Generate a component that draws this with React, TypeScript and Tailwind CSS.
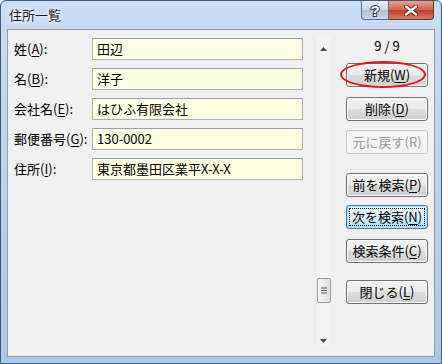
import React from "react";

const font = { fontFamily: '"Noto Sans CJK JP", "Noto Sans", sans-serif' };

function Ul({ text, k, suffix = ":" }: { text: string; k: string; suffix?: string }) {
  return (
    <span>
      {text}(<span className="underline underline-offset-2">{k}</span>){suffix}
    </span>
  );
}

const fields = [
  { label: "姓", key: "A", value: "田辺" },
  { label: "名", key: "B", value: "洋子" },
  { label: "会社名", key: "E", value: "はひふ有限会社" },
  { label: "郵便番号", key: "G", value: "130-0002" },
  { label: "住所", key: "I", value: "東京都墨田区業平X-X-X" },
];

function WinButton({
  label,
  k,
  variant = "normal",
  className = "",
}: {
  label: string;
  k: string;
  variant?: "normal" | "focus" | "disabled";
  className?: string;
}) {
  if (variant === "disabled") {
    return (
      <div
        className={`flex h-[24px] w-[82px] items-center justify-center rounded-[3px] border border-[#c4c7ca] bg-[#f4f4f4] text-[13px] text-[#9a9a9a] ${className}`}
      >
        {label}({k})
      </div>
    );
  }
  if (variant === "focus") {
    return (
      <div
        className={`flex h-[24px] w-[82px] items-center justify-center rounded-[3px] border border-[#3c7fb1] bg-gradient-to-b from-[#eaf6fd] via-[#d9f0fc] to-[#a7d9f5] p-[2px] text-[13px] text-black shadow-[inset_0_0_0_1px_#a6e1fb] ${className}`}
      >
        <div className="flex h-full w-full items-center justify-center border border-dotted border-black">
          <Ul text={label} k={k} suffix="" />
        </div>
      </div>
    );
  }
  return (
    <div
      className={`flex h-[24px] w-[82px] items-center justify-center rounded-[3px] border border-[#707070] bg-[linear-gradient(to_bottom,#f2f2f2_0%,#ebebeb_48%,#dddddd_52%,#cfcfcf_100%)] text-[13px] text-black shadow-[inset_0_0_0_1px_#fcfcfc] ${className}`}
    >
      <Ul text={label} k={k} suffix="" />
    </div>
  );
}

export default function App() {
  return (
    <div
      className="flex h-[364px] w-[442px] flex-col overflow-hidden rounded-t-[6px] border border-[#3f5a7a] bg-[linear-gradient(to_bottom,#c9ddf3,#b9d1ec_60%,#a9c6e8)]"
      style={font}
    >
      {/* title bar */}
      <div className="flex h-[28px] items-start">
        <div className="ml-[8px] mt-[4px] text-[13px] text-[#1a1a1a] [text-shadow:0_0_6px_#ffffff,0_0_3px_#ffffff]">
          住所一覧
        </div>
        <div className="ml-auto mr-[7px] flex">
          <div className="flex h-[19px] w-[28px] items-center justify-center rounded-bl-[4px] border border-t-0 border-[#5a6f8c] bg-[linear-gradient(to_bottom,#e3ecf6,#c8d7ea_50%,#aebfd6_51%,#c9d8ea)]">
            <span
              className="text-[15px] font-bold leading-none text-white [-webkit-text-stroke:2px_#2a3a55] [paint-order:stroke_fill]"
              style={{ fontFamily: '"Liberation Sans", sans-serif' }}
            >
              ?
            </span>
          </div>
          <div className="flex h-[19px] w-[45px] items-center justify-center rounded-br-[4px] border border-l-0 border-t-0 border-[#6b2a25] bg-[linear-gradient(to_bottom,#e8a493,#d2604d_50%,#c13b28_51%,#d87a5f)]">
            <svg width="14" height="11" viewBox="0 0 14 11">
              <path d="M2 1.5 L12 9.5 M12 1.5 L2 9.5" stroke="#3a1510" strokeWidth="4" strokeLinecap="round" />
              <path d="M2 1.5 L12 9.5 M12 1.5 L2 9.5" stroke="#ffffff" strokeWidth="2.4" strokeLinecap="round" />
            </svg>
          </div>
        </div>
      </div>

      {/* client area */}
      <div className="mx-[6px] mb-[6px] flex flex-1 border border-[#8e9bab] bg-[#f0f0f0] text-[13px] text-black">
        {/* fields */}
        <div className="flex flex-col gap-[8px] pl-[6px] pt-[8px]">
          {fields.map((f) => (
            <div key={f.key} className="flex items-center">
              <div className="w-[78px]">
                <Ul text={f.label} k={f.key} />
              </div>
              <div className="flex h-[22px] w-[211px] items-center border border-[#abadb3] border-t-[#8e9fb8] bg-[#ffffe1] px-[4px]">
                {f.value}
              </div>
            </div>
          ))}
        </div>

        {/* scrollbar */}
        <div className="ml-[12px] mt-[6px] mb-[10px] flex w-[16px] flex-col items-center border-l border-[#efeedd] bg-[#f3f3f1]">
          <svg className="mt-[11px]" width="7" height="4" viewBox="0 0 7 4">
            <path d="M0 4 L3.5 0 L7 4 Z" fill="#4a4a4a" />
          </svg>
          <div className="flex-1" />
          <div className="flex h-[25px] w-[14px] items-center justify-center rounded-[2px] border border-[#9a9a9a] bg-[linear-gradient(to_right,#f6f6f6,#e0e0e0)]">
            <svg width="6" height="7" viewBox="0 0 6 7">
              <path d="M0 1 H6 M0 3.5 H6 M0 6 H6" stroke="#555" strokeWidth="1" />
            </svg>
          </div>
          <svg className="mb-[3px] mt-[36px]" width="7" height="4" viewBox="0 0 7 4">
            <path d="M0 0 L7 0 L3.5 4 Z" fill="#4a4a4a" />
          </svg>
        </div>

        {/* buttons */}
        <div className="ml-[15px] flex flex-col items-center pt-[8px]">
          <div className="h-[16px] leading-[16px]">9 / 9</div>
          <div className="relative mt-[9px]">
            <WinButton label="新規" k="W" />
            <div className="pointer-events-none absolute -left-[6px] -top-[2px] h-[27px] w-[86px] rounded-[50%] border-2 border-[#e0141e]" />
          </div>
          <WinButton label="削除" k="D" className="mt-[10px]" />
          <WinButton label="元に戻す" k="R" variant="disabled" className="mt-[9px]" />
          <WinButton label="前を検索" k="P" className="mt-[19px]" />
          <WinButton label="次を検索" k="N" variant="focus" className="mt-[8px]" />
          <WinButton label="検索条件" k="C" className="mt-[10px]" />
          <WinButton label="閉じる" k="L" className="mt-[17px]" />
        </div>
      </div>
    </div>
  );
}
